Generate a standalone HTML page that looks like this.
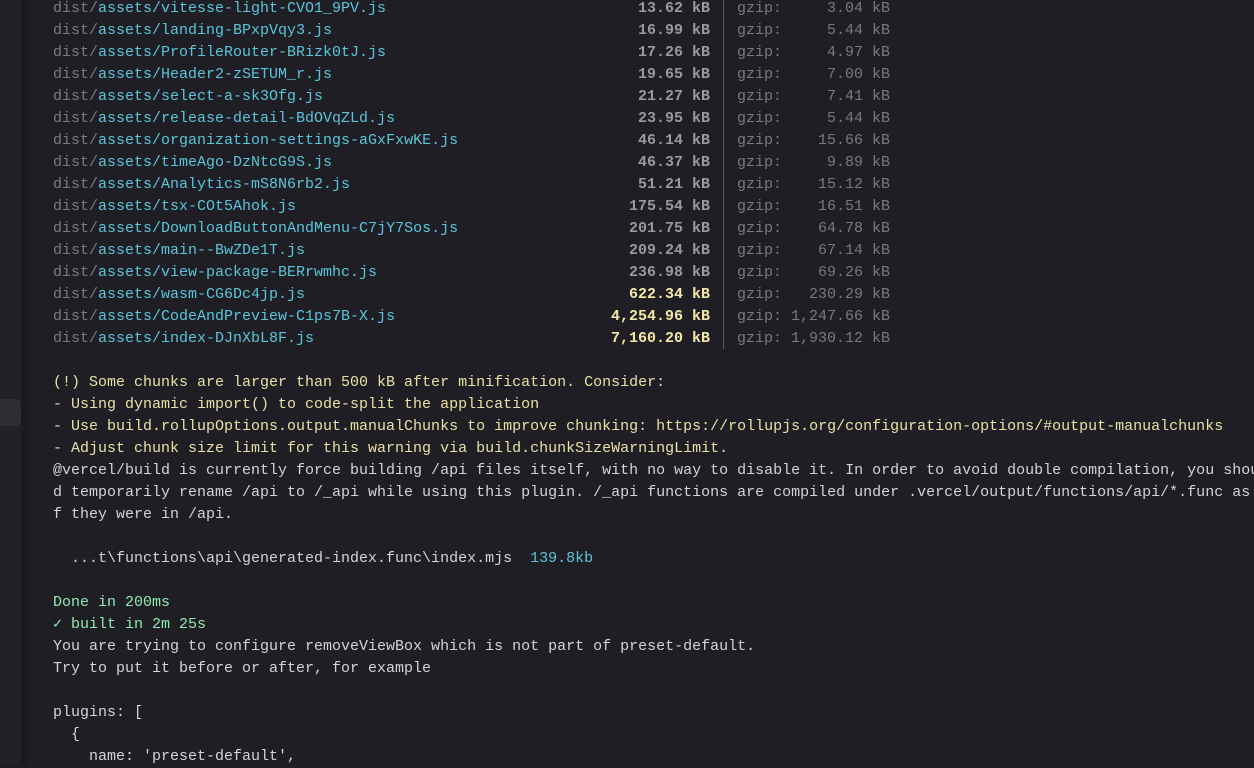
<!DOCTYPE html>
<html><head><meta charset="utf-8"><style>
html,body{margin:0;padding:0;}
body{width:1254px;height:764px;background:#1f1e24;overflow:hidden;position:relative;font-family:"Liberation Mono","DejaVu Sans Mono",monospace;font-size:15px;}
.side{position:absolute;left:0;top:0;width:21px;height:764px;background:#222127;}
.side2{position:absolute;left:21px;top:0;width:7px;height:764px;background:#1b1a1f;}
.hl{position:absolute;left:0;top:399px;width:21px;height:27px;background:#2e2d34;border-radius:0 5px 5px 0;}
.vl{position:absolute;left:723px;top:0;width:1px;height:349px;background:#5a5a5a;}
.t{position:absolute;left:53px;top:-2px;white-space:pre;line-height:22px;color:#d4d4d4;}
.r{height:22px;}
.n{display:inline-block;width:558px;}
.d{color:#7a7a7a}.a{color:#58c6da}
.s{display:inline-block;width:99px;text-align:right;font-weight:bold;color:#9a9a9a;}
.s.y{color:#f4e8a6}
.g{display:inline-block;width:126px;margin-left:27px;color:#7a7a7a;position:relative;}
.g b{font-weight:normal;position:absolute;right:0;top:0}
.w{color:#e8e1a6}
.gr{color:#8eeab2}
.c{color:#58c6da}
</style></head><body>
<div class="side"></div><div class="side2"></div><div class="hl"></div><div class="vl"></div>
<div class="t"><div class="r"><span class="n"><span class="d">dist/</span><span class="a">assets/vitesse-light-CVO1_9PV.js</span></span><span class="s">13.62 kB</span><span class="g">gzip:<b>3.04</b></span><span class="d"> kB</span></div><div class="r"><span class="n"><span class="d">dist/</span><span class="a">assets/landing-BPxpVqy3.js</span></span><span class="s">16.99 kB</span><span class="g">gzip:<b>5.44</b></span><span class="d"> kB</span></div><div class="r"><span class="n"><span class="d">dist/</span><span class="a">assets/ProfileRouter-BRizk0tJ.js</span></span><span class="s">17.26 kB</span><span class="g">gzip:<b>4.97</b></span><span class="d"> kB</span></div><div class="r"><span class="n"><span class="d">dist/</span><span class="a">assets/Header2-zSETUM_r.js</span></span><span class="s">19.65 kB</span><span class="g">gzip:<b>7.00</b></span><span class="d"> kB</span></div><div class="r"><span class="n"><span class="d">dist/</span><span class="a">assets/select-a-sk3Ofg.js</span></span><span class="s">21.27 kB</span><span class="g">gzip:<b>7.41</b></span><span class="d"> kB</span></div><div class="r"><span class="n"><span class="d">dist/</span><span class="a">assets/release-detail-BdOVqZLd.js</span></span><span class="s">23.95 kB</span><span class="g">gzip:<b>5.44</b></span><span class="d"> kB</span></div><div class="r"><span class="n"><span class="d">dist/</span><span class="a">assets/organization-settings-aGxFxwKE.js</span></span><span class="s">46.14 kB</span><span class="g">gzip:<b>15.66</b></span><span class="d"> kB</span></div><div class="r"><span class="n"><span class="d">dist/</span><span class="a">assets/timeAgo-DzNtcG9S.js</span></span><span class="s">46.37 kB</span><span class="g">gzip:<b>9.89</b></span><span class="d"> kB</span></div><div class="r"><span class="n"><span class="d">dist/</span><span class="a">assets/Analytics-mS8N6rb2.js</span></span><span class="s">51.21 kB</span><span class="g">gzip:<b>15.12</b></span><span class="d"> kB</span></div><div class="r"><span class="n"><span class="d">dist/</span><span class="a">assets/tsx-COt5Ahok.js</span></span><span class="s">175.54 kB</span><span class="g">gzip:<b>16.51</b></span><span class="d"> kB</span></div><div class="r"><span class="n"><span class="d">dist/</span><span class="a">assets/DownloadButtonAndMenu-C7jY7Sos.js</span></span><span class="s">201.75 kB</span><span class="g">gzip:<b>64.78</b></span><span class="d"> kB</span></div><div class="r"><span class="n"><span class="d">dist/</span><span class="a">assets/main--BwZDe1T.js</span></span><span class="s">209.24 kB</span><span class="g">gzip:<b>67.14</b></span><span class="d"> kB</span></div><div class="r"><span class="n"><span class="d">dist/</span><span class="a">assets/view-package-BERrwmhc.js</span></span><span class="s">236.98 kB</span><span class="g">gzip:<b>69.26</b></span><span class="d"> kB</span></div><div class="r"><span class="n"><span class="d">dist/</span><span class="a">assets/wasm-CG6Dc4jp.js</span></span><span class="s y">622.34 kB</span><span class="g">gzip:<b>230.29</b></span><span class="d"> kB</span></div><div class="r"><span class="n"><span class="d">dist/</span><span class="a">assets/CodeAndPreview-C1ps7B-X.js</span></span><span class="s y">4,254.96 kB</span><span class="g">gzip:<b>1,247.66</b></span><span class="d"> kB</span></div><div class="r"><span class="n"><span class="d">dist/</span><span class="a">assets/index-DJnXbL8F.js</span></span><span class="s y">7,160.20 kB</span><span class="g">gzip:<b>1,930.12</b></span><span class="d"> kB</span></div><div class="r"></div><div class="r w">(!) Some chunks are larger than 500 kB after minification. Consider:</div><div class="r w">- Using dynamic import() to code-split the application</div><div class="r w">- Use build.rollupOptions.output.manualChunks to improve chunking: https://rollupjs.org/configuration-options/#output-manualchunks</div><div class="r w">- Adjust chunk size limit for this warning via build.chunkSizeWarningLimit.</div><div class="r">@vercel/build is currently force building /api files itself, with no way to disable it. In order to avoid double compilation, you shoul</div><div class="r">d temporarily rename /api to /_api while using this plugin. /_api functions are compiled under .vercel/output/functions/api/*.func as i</div><div class="r">f they were in /api.</div><div class="r"></div><div class="r">  ...t\functions\api\generated-index.func\index.mjs  <span class="c">139.8kb</span></div><div class="r"></div><div class="r gr">Done in 200ms</div><div class="r gr">✓ built in 2m 25s</div><div class="r">You are trying to configure removeViewBox which is not part of preset-default.</div><div class="r">Try to put it before or after, for example</div><div class="r"></div><div class="r">plugins: [</div><div class="r">  {</div><div class="r">    name: 'preset-default',</div></div>
</body></html>
